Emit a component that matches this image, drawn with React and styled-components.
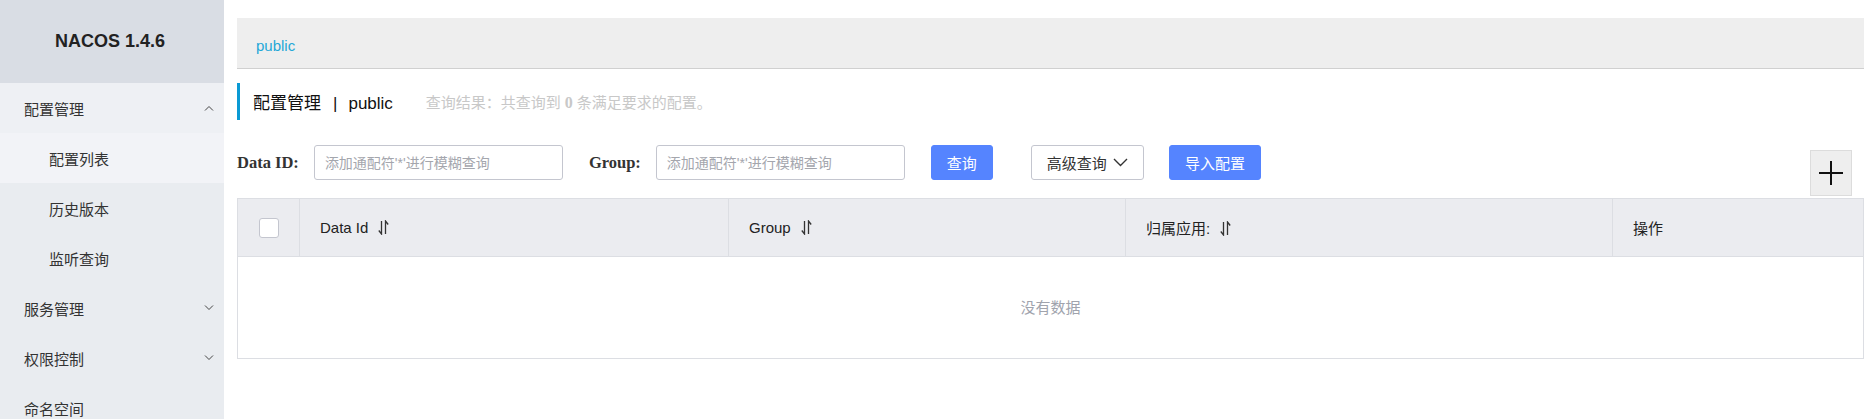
import React from 'react';
import styled, { createGlobalStyle } from 'styled-components';

const sans = `"Liberation Sans", "Noto Sans CJK SC", sans-serif`;
const serif = `"Liberation Serif", "Noto Sans CJK SC", serif`;

const GlobalStyle = createGlobalStyle`
    body {
        margin: 0;
        font-family: ${sans};
        color: #333;
        background: #fff;
    }
`

const Layout = styled.div`
    display: flex;
    min-height: 100vh;
`

const Sidebar = styled.aside`
    width: 224px;
    flex-shrink: 0;
    background: #e9ecf0;
`

const Brand = styled.div`
    height: 83px;
    display: flex;
    align-items: center;
    justify-content: center;
    background: #d9dde4;
    font-weight: bold;
    font-size: 18px;
    color: #222;
    padding-right: 4px;
`

const NavItem = styled.div`
    height: 50px;
    display: flex;
    align-items: center;
    justify-content: space-between;
    padding: 0 10px 0 ${p => (p.$sub ? 49 : 24)}px;
    font-size: 15px;
    color: #333;
    background: ${p => p.$bg || 'transparent'};
    svg{
        display: block;
    }
`

const Main = styled.main`
    flex: 1;
    min-width: 0;
    padding: 18px 8px 0 13px;
`

const Crumb = styled.div`
    box-sizing: border-box;
    height: 51px;
    display: flex;
    align-items: center;
    padding: 5px 0 0 19px;
    background: #eeeeee;
    border-bottom: 1px solid #d0d0d0;
    font-size: 15px;
    color: #1ea7d7;
`

const TitleRow = styled.div`
    margin-top: 14px;
    height: 37px;
    display: flex;
    align-items: center;
    border-left: 3px solid #0a9ad4;
    padding-left: 13px;
`

const Title = styled.div`
    font-size: 17px;
    color: #111;
    span{
        margin: 0 11px 0 12px;
    }
`

const Summary = styled.div`
    margin-left: 33px;
    font-size: 15px;
    color: #c8c8c8;
    b{
        font-family: ${serif};
        font-size: 16px;
        margin: 0 4px;
    }
`

const Filters = styled.div`
    margin-top: 25px;
    display: flex;
    align-items: flex-start;
    margin-bottom: 2px;
`

const Label = styled.label`
    height: 35px;
    display: flex;
    align-items: center;
    font-family: ${serif};
    font-weight: bold;
    font-size: 16.5px;
    color: #333;
    margin-left: ${p => p.$gap || 0}px;
    margin-right: 15px;
`

const Input = styled.input`
    box-sizing: border-box;
    width: 249px;
    height: 35px;
    padding: 0 10px;
    border: 1px solid #c4c6cf;
    border-radius: 3px;
    font-family: ${sans};
    font-size: 14px;
    outline: none;
    &::placeholder{
        color: #a4a6ad;
    }
`

const Button = styled.button`
    box-sizing: border-box;
    height: 35px;
    margin-left: ${p => p.$gap}px;
    padding: 0 ${p => p.$pad || 15}px;
    display: flex;
    align-items: center;
    gap: 6px;
    font-family: ${sans};
    font-size: 15px;
    border-radius: 3px;
    cursor: pointer;
    color: ${p => (p.$primary ? '#fff' : '#333')};
    background: ${p => (p.$primary ? '#5584ff' : '#fff')};
    border: 1px solid ${p => (p.$primary ? '#5584ff' : '#c4c6cf')};
`

const AddButton = styled.button`
    box-sizing: border-box;
    width: 42px;
    height: 46px;
    margin: 5px 12px 0 auto;
    padding: 0;
    display: flex;
    align-items: center;
    justify-content: center;
    background: #eeeeee;
    border: 1px solid #dcdcdc;
    cursor: pointer;
`

const Table = styled.table`
    width: 100%;
    border-collapse: collapse;
    table-layout: fixed;
    border: 1px solid #dcdee3;
`

const Th = styled.th`
    box-sizing: border-box;
    height: 58px;
    padding: 0 0 0 ${p => (p.$center ? 0 : 20)}px;
    text-align: ${p => (p.$center ? 'center' : 'left')};
    font-weight: normal;
    font-size: 15px;
    color: #222;
    background: #ebecf0;
    border-right: 1px solid #dcdee3;
    border-bottom: 1px solid #dcdee3;
    svg{
        vertical-align: -2px;
        margin-left: 10px;
    }
`

const Empty = styled.td`
    height: 99px;
    padding: 0 0 2px;
    text-align: center;
    font-size: 15px;
    color: #a0a3ad;
`

const Checkbox = styled.span`
    display: inline-block;
    box-sizing: border-box;
    width: 20px;
    height: 20px;
    vertical-align: middle;
    background: #fff;
    border: 1px solid #c4c6cf;
    border-radius: 3px;
`

const Chevron = ({ up }) => (
    <svg width="10" height="6" viewBox="0 0 10 6">
        <polyline points={up ? '1,5.5 5,1.5 9,5.5' : '1,0.5 5,4.5 9,0.5'} fill="none" stroke="#444" strokeWidth="1" />
    </svg>
)

const SortIcon = () => (
    <svg width="11" height="15" viewBox="0 0 11 15">
        <g fill="none" stroke="#333" strokeWidth="1.3">
            <path d="M3.5 1 V14 L0.8 10.5" />
            <path d="M7.5 14 V1 L10.2 4.5" />
        </g>
    </svg>
)

const menu = [
    { name: '配置管理', bg: '#eef0f4', icon: 'up' },
    { name: '配置列表', bg: '#f2f3f7', sub: true },
    { name: '历史版本', sub: true },
    { name: '监听查询', sub: true },
    { name: '服务管理', icon: 'down' },
    { name: '权限控制', icon: 'down' },
    { name: '命名空间' },
]

const columns = [
    { title: 'Data Id', width: 429 },
    { title: 'Group', width: 397 },
    { title: '归属应用:', width: 487 },
]

export default function App() {
    return (
        <Layout>
            <GlobalStyle />
            <Sidebar>
                <Brand>NACOS 1.4.6</Brand>
                {menu.map(item => (
                    <NavItem key={item.name} $sub={item.sub} $bg={item.bg}>
                        {item.name}
                        {item.icon && <Chevron up={item.icon === 'up'} />}
                    </NavItem>
                ))}
            </Sidebar>
            <Main>
                <Crumb>public</Crumb>
                <TitleRow>
                    <Title>配置管理<span>|</span>public</Title>
                    <Summary>查询结果：共查询到<b>0</b>条满足要求的配置。</Summary>
                </TitleRow>
                <Filters>
                    <Label>Data ID:</Label>
                    <Input placeholder="添加通配符'*'进行模糊查询" />
                    <Label $gap={26}>Group:</Label>
                    <Input placeholder="添加通配符'*'进行模糊查询" />
                    <Button $primary $gap={26}>查询</Button>
                    <Button $gap={38}>
                        高级查询
                        <svg width="15" height="9" viewBox="0 0 15 9">
                            <polyline points="1,1 7.5,7.5 14,1" fill="none" stroke="#333" strokeWidth="1.4" />
                        </svg>
                    </Button>
                    <Button $primary $gap={25}>导入配置</Button>
                    <AddButton>
                        <svg width="26" height="26" viewBox="0 0 26 26">
                            <path d="M13 1 V25 M1 13 H25" stroke="#111" strokeWidth="2" />
                        </svg>
                    </AddButton>
                </Filters>
                <Table>
                    <thead>
                        <tr>
                            <Th $center style={{ width: 62 }}><Checkbox /></Th>
                            {columns.map(col => (
                                <Th key={col.title} style={{ width: col.width }}>
                                    {col.title}
                                    <SortIcon />
                                </Th>
                            ))}
                            <Th>操作</Th>
                        </tr>
                    </thead>
                    <tbody>
                        <tr>
                            <Empty colSpan={5}>没有数据</Empty>
                        </tr>
                    </tbody>
                </Table>
            </Main>
        </Layout>
    )
}
